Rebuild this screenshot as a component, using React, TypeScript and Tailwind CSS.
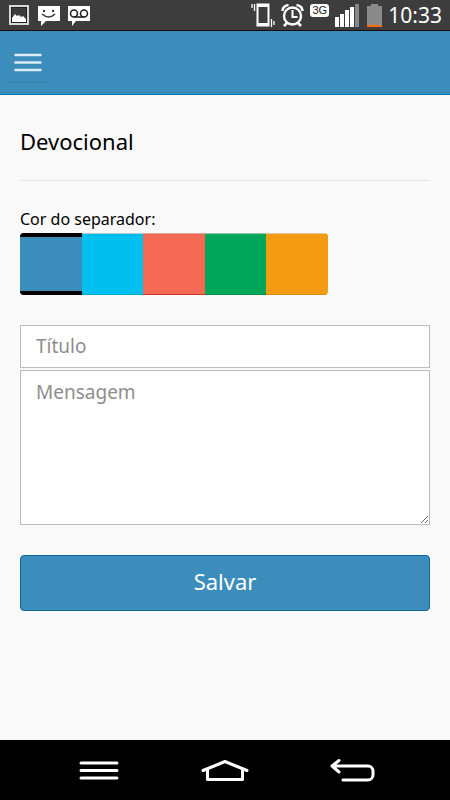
import React from "react";

function StatusBar() {
  return (
    <div className="flex h-[31px] items-center justify-between border-b border-[#1c0a0a] bg-[#3d3d3d] px-2 text-white">
      <div className="flex items-center gap-2">
        <svg className="h-6 w-[22px]" viewBox="0 0 22 24" fill="none">
          <rect x="2" y="3" width="18" height="18" stroke="#d8d8d8" strokeWidth="2" />
          <rect x="3.5" y="4.5" width="15" height="15" stroke="#222" />
          <path d="M4 19v-4l3-4 2 2 2-1 2 2 2-1 3 3v3z" fill="#fff" />
        </svg>
        <svg className="h-6 w-[22px]" viewBox="0 0 22 24" fill="none">
          <path d="M0 3h22v15H8l-5 5v-5H0z" fill="#fff" />
          <rect x="5" y="7" width="2" height="2" fill="#333" />
          <rect x="14" y="7" width="2" height="2" fill="#333" />
          <path d="M4 11q7 6 13 0" stroke="#333" strokeWidth="1.5" />
        </svg>
        <svg className="h-6 w-[22px]" viewBox="0 0 22 24" fill="none">
          <path d="M0 3h22v15H8l-4 5v-5H0z" fill="#fff" />
          <circle cx="6" cy="10.5" r="3.5" stroke="#222" strokeWidth="1.6" />
          <circle cx="16" cy="10.5" r="3.5" stroke="#222" strokeWidth="1.6" />
          <path d="M6 14h10" stroke="#222" strokeWidth="1.6" />
        </svg>
      </div>

      <div className="flex items-center gap-1.5">
        <svg className="h-6 w-6" viewBox="0 0 24 24" fill="none" stroke="#fff">
          <rect x="6.5" y="1.5" width="11" height="21" strokeWidth="2" />
          <path d="M6 3h12M6 21h12" strokeWidth="2" />
          <path d="M1 1v4M3.5 1v7M20.5 16v8M23 18v4" strokeWidth="1.3" />
        </svg>
        <svg className="h-6 w-[23px]" viewBox="0 0 23 24" fill="none" stroke="#fff">
          <circle cx="11.5" cy="13" r="8.5" strokeWidth="2.4" />
          <path d="M11.5 7v7h5" strokeWidth="2" />
          <path d="M1.500 8q0-5 6-6M21.500 8q0-5-6-6M6 20l-3 3M17 20l3 3" strokeWidth="2.6" />
        </svg>
        <span className="mb-2.5 flex h-[13px] w-[19px] items-center justify-center rounded-[3px] bg-white font-['Liberation_Sans',sans-serif] text-[11px] leading-3 text-[#222]">
          3G
        </span>
        <div className="flex items-center gap-2">
          <svg className="h-6 w-6" viewBox="0 0 24 24" fill="#fff">
            <rect x="0" y="14" width="4" height="10" />
            <rect x="5" y="11" width="4" height="13" />
            <rect x="10" y="7" width="4" height="17" />
            <rect x="15" y="4" width="4" height="20" />
            <rect x="20" y="1" width="4" height="23" fill="#888" />
          </svg>
          <svg className="h-6 w-[15px]" viewBox="0 0 15 24">
            <path d="M4 1h7v2h4v20H0V3h4z" fill="#8a8a8a" />
            <rect y="22" width="15" height="2" fill="#ff6a00" />
          </svg>
        </div>
        <span className="text-[21px] leading-6">10:33</span>
      </div>
    </div>
  );
}

const colors = [
  { name: "Azul", style: "bg-[#3c8dbc] border-y-[#367fa9]" },
  { name: "Ciano", style: "bg-[#00c0ef] border-t-[#b8c8cc] border-b-[#00acd6]" },
  { name: "Vermelho", style: "bg-[#f56954] border-t-[#d8a8a0] border-b-[#d33724]" },
  { name: "Verde", style: "bg-[#00a65a] border-t-[#a0c8b0] border-b-[#008d4c]" },
  { name: "Laranja", style: "bg-[#f39c12] border-t-[#e0c8a0] border-b-[#db8b0b]" },
];

export default function App() {
  return (
    <div className="flex min-h-screen flex-col bg-[#f9f9f9] font-['Noto_Sans',sans-serif] text-black">
      <StatusBar />

      <header className="flex h-16 items-center border-b border-[#0073b7] bg-[#3c8dbc] px-2">
        <button
          type="button"
          aria-label="Menu"
          className="flex h-10 w-10 items-center justify-center border-b border-[#367fa9]"
        >
          <svg className="h-6 w-7" viewBox="0 0 28 24" stroke="#dcecf6" strokeWidth="2.6" strokeLinecap="round">
            <path d="M1.500 5h25M1.500 12.500h25M1.500 20h25" />
          </svg>
        </button>
      </header>

      <main className="flex-1 px-5 pt-[30px]">
        <h1 className="text-[22px] leading-8">Devocional</h1>
        <hr className="mt-[23px] border-[#e6e6e6]" />

        <form onSubmit={(e) => e.preventDefault()}>
          <fieldset className="mt-[26px]">
            <legend className="pb-0.5 text-base leading-6">Cor do separador:</legend>
            <div className="flex h-[62px] w-3/4 overflow-hidden rounded">
              {colors.map((c, idx) => (
                <label key={c.name} className="flex flex-1">
                  <input
                    type="radio"
                    name="cor"
                    aria-label={c.name}
                    defaultChecked={idx === 0}
                    className={`w-full appearance-none border-y checked:border-y-4 checked:border-y-black ${c.style}`}
                  />
                </label>
              ))}
            </div>
          </fieldset>

          <input
            type="text"
            aria-label="Título"
            placeholder="Título"
            className="mt-[30px] block h-[43px] w-full border border-[#bbb] bg-white px-[15px] pb-0.5 text-[19px] placeholder:text-[#8e8e8e]"
          />
          <textarea
            aria-label="Mensagem"
            placeholder="Mensagem"
            className="mt-[2px] block h-[155px] w-full resize-y border border-[#bbb] bg-white px-[15px] py-[7px] text-[19px] placeholder:text-[#8e8e8e]"
          />

          <button
            type="submit"
            className="mt-[30px] block h-14 w-full rounded border border-[#0f6a9c] bg-[#3c8dbc] pb-1 text-[22px] text-white"
          >
            Salvar
          </button>
        </form>
      </main>

      <nav className="flex h-[60px] items-center justify-center gap-[78px] bg-black">
        <button type="button" aria-label="Opções">
          <svg className="h-6 w-12" viewBox="0 0 48 24" stroke="#fff" strokeWidth="3" strokeLinecap="round">
            <path d="M6 5h36M6 12.500h36M6 20h36" />
          </svg>
        </button>
        <button type="button" aria-label="Início">
          <svg
            className="h-6 w-12"
            viewBox="0 0 48 24"
            fill="none"
            stroke="#fff"
            strokeWidth="3"
            strokeLinecap="round"
            strokeLinejoin="round"
          >
            <path d="M2 12.500L24 3.500l22 9M6.500 12v9.500h35V12" />
          </svg>
        </button>
        <button type="button" aria-label="Voltar">
          <svg
            className="h-6 w-12"
            viewBox="0 0 48 24"
            fill="none"
            stroke="#fff"
            strokeWidth="3"
            strokeLinecap="round"
            strokeLinejoin="round"
          >
            <path d="M12 2.500L5 8l7 6M5 8h36a5 5 0 0 1 5 5v4a5 5 0 0 1-5 5H16" />
          </svg>
        </button>
      </nav>
    </div>
  );
}
